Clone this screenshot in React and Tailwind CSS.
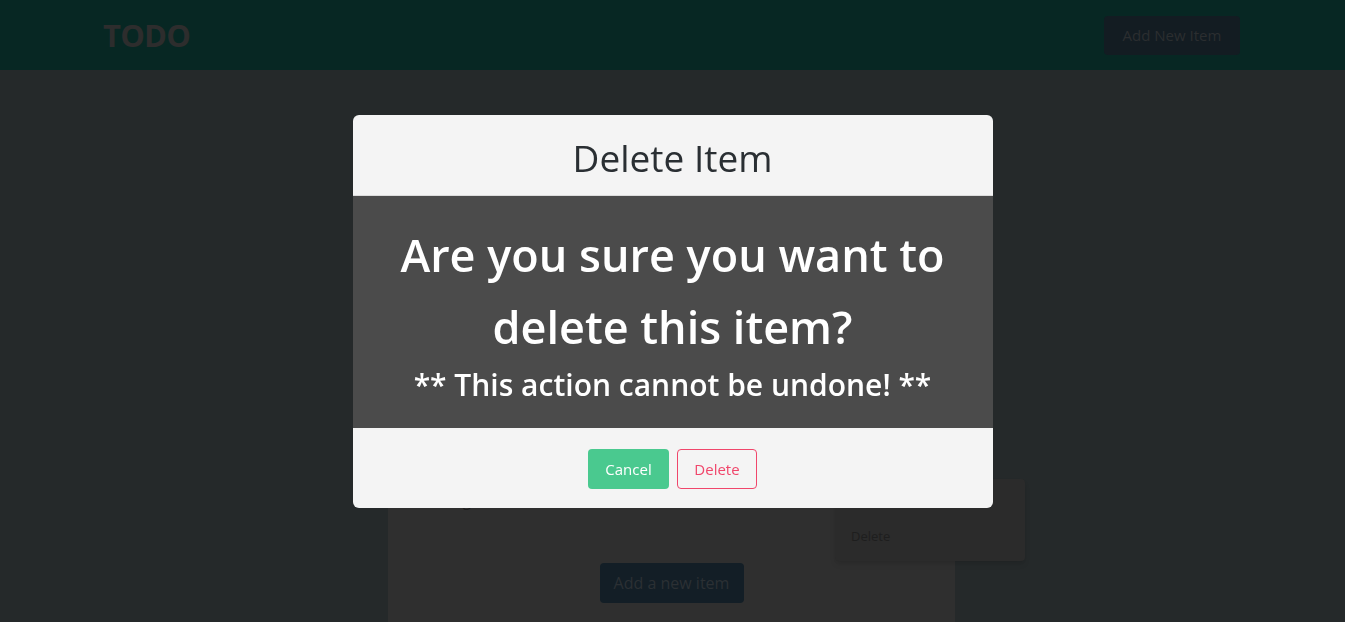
import React from "react";

const font = { fontFamily: '"Open Sans", "Noto Sans", sans-serif' };

const Navbar = () => (
  <nav className="h-[70px] bg-[#072723] flex items-center justify-between pl-[103px] pr-[105px]">
    <h1 className="text-[31px] font-bold text-[#2d2d2d] tracking-tight">TODO</h1>
    <button className="h-[39px] w-[136px] rounded bg-[#131c22] text-[15px] text-[#2b2e30]">Add New Item</button>
  </nav>
);

const Board = () => (
  <main className="relative h-[552px]">
    <section className="absolute left-[388px] top-[320px] w-[567px] h-[240px] bg-[#2f2f2f]">
      <p className="pl-[24px] pt-[99px] text-[15px] text-[#1c1c1c]">Morning run</p>
      <div className="flex justify-center mt-[51px]">
        <button className="h-[40px] w-[144px] rounded bg-[#131e26] text-[16px] text-[#2b3034]">Add a new item</button>
      </div>
    </section>
    <div className="absolute left-[835px] top-[409px] w-[190px] h-[82px] bg-[#2b2b2b] shadow-md rounded-sm">
      <div className="pl-[16px] pt-[48px] text-[13px] text-[#1e1e1e]">Delete</div>
    </div>
  </main>
);

const DeleteModal = () => (
  <div className="fixed inset-0 flex justify-center pt-[115px]">
    <div className="w-[640px] h-fit rounded-md overflow-hidden bg-[#f4f4f4]">
      <header className="h-[81px] pt-[6px] flex items-center justify-center border-b border-[#dcdcdc]">
        <h2 className="text-[37px] text-[#2a2f33]">Delete Item</h2>
      </header>
      <div className="bg-[#4b4b4b] text-white text-center pt-[23px] pb-[21px]">
        <p className="text-[45px] font-semibold leading-[72px] px-[30px]">Are you sure you want to delete this item?</p>
        <p className="text-[30px] font-semibold leading-[44px]">** This action cannot be undone! **</p>
      </div>
      <footer className="h-[80px] pt-[2px] flex items-center justify-center gap-2">
        <button className="h-[40px] w-[81px] rounded bg-[#4ac98f] text-white text-[15px]">Cancel</button>
        <button className="h-[40px] w-[80px] rounded border border-[#f0466b] text-[#f0466b] text-[15px]">Delete</button>
      </footer>
    </div>
  </div>
);

export default function App() {
  return (
    <div className="min-h-[622px] bg-[#25292a] overflow-hidden" style={font}>
      <Navbar />
      <Board />
      <DeleteModal />
    </div>
  );
}
